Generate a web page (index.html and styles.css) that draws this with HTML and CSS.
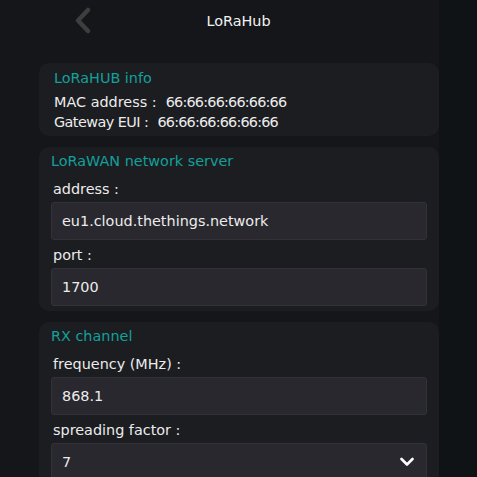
FILE: index.html
```html
<!DOCTYPE html>
<html lang="en">
<head>
<meta charset="utf-8">
<title>LoRaHub</title>
<link rel="stylesheet" href="styles.css">
</head>
<body>
<div class="app">
  <header class="topbar">
    <div class="back">
      <svg width="22" height="30" viewBox="0 0 22 30"><path d="M15 4 L5 14.5 L15 25" fill="none" stroke="#3b3f3e" stroke-width="4.5" stroke-linecap="round" stroke-linejoin="round"/></svg>
    </div>
    <div class="title">LoRaHub</div>
    <div></div>
  </header>
  <main class="content">
    <section class="card card-info">
      <div class="card-title">LoRaHUB info</div>
      <div class="info-row">MAC address :&nbsp; <span class="value">66:66:66:66:66:66</span></div>
      <div class="info-row"><span class="tight">Gateway EUI :</span>&nbsp; <span class="value">66:66:66:66:66:66</span></div>
    </section>
    <section class="card">
      <div class="card-title">LoRaWAN network server</div>
      <div class="label first">address :</div>
      <div class="field">eu1.cloud.thethings.network</div>
      <div class="label">port :</div>
      <div class="field">1700</div>
    </section>
    <section class="card">
      <div class="card-title">RX channel</div>
      <div class="label first">frequency (MHz) :</div>
      <div class="field">868.1</div>
      <div class="label">spreading factor :</div>
      <div class="field select"><span>7</span>
        <svg width="14" height="10" viewBox="0 0 14 10"><path d="M1.5 2 L7 7.5 L12.5 2" fill="none" stroke="#ffffff" stroke-width="2.6" stroke-linecap="round" stroke-linejoin="round"/></svg>
      </div>
    </section>
  </main>
</div>
</body>
</html>
```
FILE: styles.css
```css
html, body {
  margin: 0;
  padding: 0;
  background: #101316;
  height: 100%;
  overflow: hidden;
}
body {
  font-family: "DejaVu Sans", sans-serif;
  font-size: 14.4px;
  line-height: 20px;
  color: #ececec;
}
.app {
  width: 439px;
  min-height: 100%;
  background: #14161a;
}
.topbar {
  height: 42px;
  display: grid;
  grid-template-columns: 1fr auto 1fr;
  align-items: center;
  width: 477px;
  margin-bottom: 21px;
}
.back {
  padding-left: 73px;
  display: flex;
  align-items: center;
}
.back svg { display: block; }
.title {
  color: #f2f2f2;
}
.content {
  display: flex;
  flex-direction: column;
  gap: 11px;
  padding-left: 39px;
  width: 400px;
}
.card {
  background: #1b1d21;
  border-radius: 10px;
  padding: 4px 12px 5px;
  display: flex;
  flex-direction: column;
}
.card-info {
  padding: 5px 14px 4px 15px;
}
.card-title {
  color: #14a09a;
}
.card-info .card-title { margin-bottom: 4px; }
.info-row { white-space: nowrap; }
.value { letter-spacing: -0.8px; }
.tight { letter-spacing: -0.55px; }
.label {
  padding-left: 2px;
  margin-top: 5px;
  margin-bottom: 3px;
}
.label.first { margin-top: 8px; }
.field {
  height: 36px;
  background: #29282e;
  border: 1px solid #333238;
  border-radius: 3px;
  padding: 0 12px 0 10px;
  display: flex;
  align-items: center;
  justify-content: space-between;
}
.select svg { display: block; }
```
